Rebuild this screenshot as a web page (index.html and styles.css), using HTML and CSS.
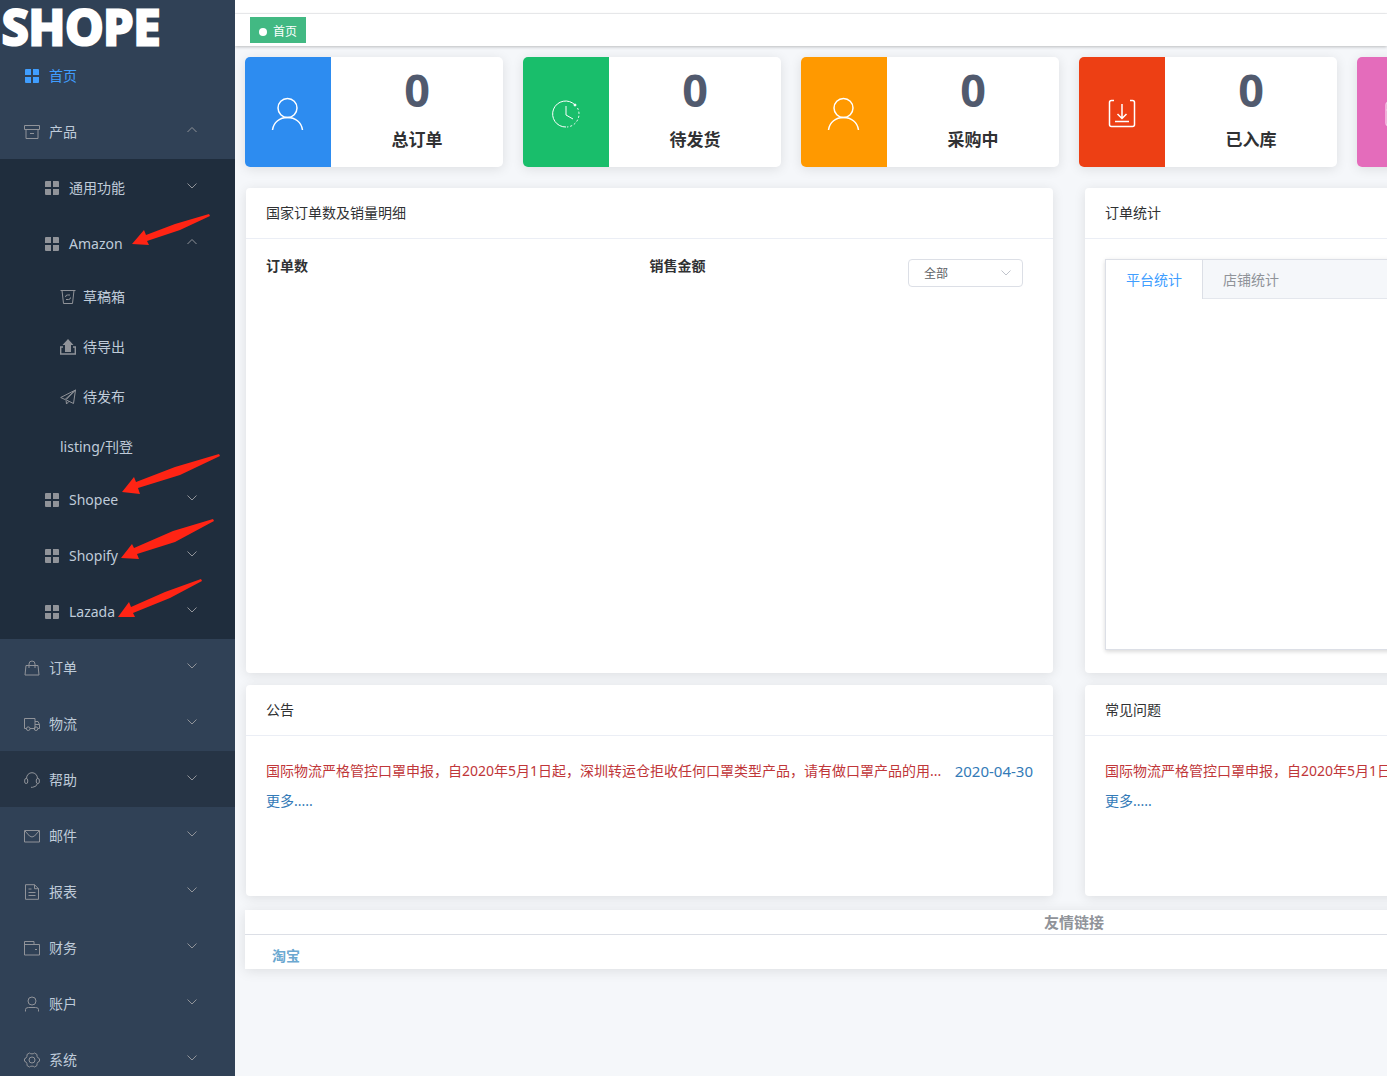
FILE: index.html
```html
<!DOCTYPE html>
<html lang="zh-CN">
<head>
<meta charset="utf-8">
<title>首页</title>
<link rel="stylesheet" href="styles.css">
</head>
<body>
<svg class="defs" aria-hidden="true">
  <symbol id="grid" viewBox="0 0 16 16"><path fill="currentColor" stroke="none" d="M1 2q0-1 1-1h5v6H1zM9 1h5q1 0 1 1v5H9zM1 9h6v6H2q-1 0-1-1zM9 9h6v5q0 1-1 1H9z"/></symbol>
  <symbol id="box" viewBox="0 0 16 16"><path d="M.5 1.500h15v4H.5zM2 5.500v9h12v-9M6 9.500h4"/></symbol>
  <symbol id="bin" viewBox="0 0 16 16"><path d="M.5 1.500h15M2 1.500l1.500 13h9l1.500-13M5.500 8q0-2 2-2h2.500M10.500 8.500q0 2-2 2H6"/></symbol>
  <symbol id="export" viewBox="0 0 16 16"><path fill="currentColor" stroke="none" d="M8 0l5.500 6h-2.500V13H5V6H2.500z"/><path d="M3 8H.7v7h14.600V8H13" stroke-width="1.400"/></symbol>
  <symbol id="plane" viewBox="0 0 16 16"><path d="M15.500 1L.7 8.500l4.300 2L15.500 1l-2 13.500-4.500-2.200L6.500 15 6 10.800 15 1.500M9 12.300l-2-1"/></symbol>
  <symbol id="bag" viewBox="0 0 16 16"><path d="M2 5.500h12l1 9.500H1zM5 8V4q0-3 3-3t3 3v4"/></symbol>
  <symbol id="truck" viewBox="0 0 16 16"><path d="M2.500 12.500h-2v-10h10.500v10H6M11 5.500h3l1.500 3v4H14M11 8.500h4.500"/><circle cx="4.200" cy="12.700" r="1.800"/><circle cx="12" cy="12.700" r="1.800"/></symbol>
  <symbol id="headset" viewBox="0 0 16 16"><path d="M2.500 6.500C2.500 3 5 .7 8 .7s5.500 2.300 5.500 5.800M13.500 11.500q-1 3.500-5 3.800H7"/><rect x=".7" y="6.500" width="3" height="5" rx="1.500"/><rect x="12.300" y="6.500" width="3" height="5" rx="1.500"/></symbol>
  <symbol id="mail" viewBox="0 0 16 16"><path d="M.5 2.500h15v11.500H.5zM1 3l4.500 5q2.500 2 5 0L15 3"/></symbol>
  <symbol id="doc" viewBox="0 0 16 16"><path d="M1.500.7h9l4 4v10.600h-13zM10.500.7v4h4M4.500 5h3M4.500 8.500h7M4.500 11.500h7"/></symbol>
  <symbol id="wallet" viewBox="0 0 16 16"><path d="M.5 4.500h15V15H.5V1.500h9.500v3M11 9.500h2"/></symbol>
  <symbol id="user" viewBox="0 0 16 16"><circle cx="8" cy="5" r="4"/><path d="M1.500 15.500v-2q0-2 3-2h7q3 0 3 2v2"/></symbol>
  <symbol id="gear" viewBox="0 0 16 16"><path d="M5.500 1l1.300.8h2.400L10.500 1 13 2.500v1.800L14.200 6l1.300.8v2.400L14 10l-1 1.700v1.800L10.500 15l-1.300-.8H6.800L5.500 15 3 13.500v-1.800L2 10 .5 9.200V6.800L2 6l1-1.700V2.500z"/><circle cx="8" cy="8" r="3"/></symbol>
  <symbol id="down" viewBox="0 0 12 12"><path d="M1.500 3.500L6 8l4.500-4.500"/></symbol>
  <symbol id="up" viewBox="0 0 12 12"><path d="M1.500 8L6 3.500 10.500 8"/></symbol>
  <symbol id="person" viewBox="0 0 36 36"><circle cx="17.500" cy="12" r="9.500"/><path d="M2.500 34C3.500 26 10 21.500 17.500 21.500S31.500 26 32.500 34"/></symbol>
  <symbol id="clock" viewBox="0 0 36 36"><path d="M27 9A13 13 0 1 0 18 31M18 10v9l7 4"/><path stroke-dasharray="2 2" d="M29.500 12A13 13 0 0 1 19 31"/><circle cx="27" cy="9" r="1" fill="currentColor"/></symbol>
  <symbol id="inbox" viewBox="0 0 36 36"><path d="M10 4.500H7.500Q5.500 4.500 5.500 6.500v22q0 2 2 2h21q2 0 2-2v-22q0-2-2-2H26M18 8v14M13.500 18l4.500 4.500 4.500-4.500M11 25.500h14"/></symbol>
  <symbol id="card" viewBox="0 0 36 36"><rect x="4" y="6" width="28" height="24" rx="3"/><path d="M4 14h28"/></symbol>
</svg>
<div class="app">
  <aside class="sidebar">
    <div class="logo">SHOPE</div>
    <nav class="menu">
      <a class="item active" href="#"><svg class="icon"><use href="#grid"/></svg><span>首页</span></a>
      <a class="item" href="#"><svg class="icon"><use href="#box"/></svg><span>产品</span><svg class="chev"><use href="#up"/></svg></a>
      <div class="submenu">
        <a class="item" href="#"><svg class="icon"><use href="#grid"/></svg><span>通用功能</span><svg class="chev"><use href="#down"/></svg></a>
        <a class="item" href="#"><svg class="icon"><use href="#grid"/></svg><span>Amazon</span><svg class="chev"><use href="#up"/></svg></a>
        <a class="leaf" href="#"><svg class="icon"><use href="#bin"/></svg><span>草稿箱</span></a>
        <a class="leaf" href="#"><svg class="icon"><use href="#export"/></svg><span>待导出</span></a>
        <a class="leaf" href="#"><svg class="icon"><use href="#plane"/></svg><span>待发布</span></a>
        <a class="leaf" href="#"><span>listing/刊登</span></a>
        <a class="item" href="#"><svg class="icon"><use href="#grid"/></svg><span>Shopee</span><svg class="chev"><use href="#down"/></svg></a>
        <a class="item" href="#"><svg class="icon"><use href="#grid"/></svg><span>Shopify</span><svg class="chev"><use href="#down"/></svg></a>
        <a class="item" href="#"><svg class="icon"><use href="#grid"/></svg><span>Lazada</span><svg class="chev"><use href="#down"/></svg></a>
      </div>
      <a class="item" href="#"><svg class="icon"><use href="#bag"/></svg><span>订单</span><svg class="chev"><use href="#down"/></svg></a>
      <a class="item" href="#"><svg class="icon"><use href="#truck"/></svg><span>物流</span><svg class="chev"><use href="#down"/></svg></a>
      <a class="item hovered" href="#"><svg class="icon"><use href="#headset"/></svg><span>帮助</span><svg class="chev"><use href="#down"/></svg></a>
      <a class="item" href="#"><svg class="icon"><use href="#mail"/></svg><span>邮件</span><svg class="chev"><use href="#down"/></svg></a>
      <a class="item" href="#"><svg class="icon"><use href="#doc"/></svg><span>报表</span><svg class="chev"><use href="#down"/></svg></a>
      <a class="item" href="#"><svg class="icon"><use href="#wallet"/></svg><span>财务</span><svg class="chev"><use href="#down"/></svg></a>
      <a class="item" href="#"><svg class="icon"><use href="#user"/></svg><span>账户</span><svg class="chev"><use href="#down"/></svg></a>
      <a class="item" href="#"><svg class="icon"><use href="#gear"/></svg><span>系统</span><svg class="chev"><use href="#down"/></svg></a>
    </nav>
    <svg class="arrows" viewBox="0 0 235 640" aria-hidden="true">
      <path d="M132 244L144 230 146 235 175 224 209 214 210 216 180 230 147 241 149 245z"/>
      <path d="M122 492L134 477 136 482 175 467 219 454 220 456 180 475 138 488 140 494z"/>
      <path d="M121 558L132 544 134 548 173 531 213 519 214 521 175 542 137 554 139 559z"/>
      <path d="M118 617L129 602 131 607 165 592 201 579 202 581 170 598 133 613 135 617z"/>
    </svg>
  </aside>
  <main class="main">
    <header class="navbar"></header>
    <div class="tags"><a class="tag" href="#">首页</a></div>
    <div class="content">
      <section class="stats">
        <article class="stat"><div class="badge blue"><svg><use href="#person"/></svg></div><div class="figure"><strong>0</strong><span>总订单</span></div></article>
        <article class="stat"><div class="badge green"><svg><use href="#clock"/></svg></div><div class="figure"><strong>0</strong><span>待发货</span></div></article>
        <article class="stat"><div class="badge orange"><svg><use href="#person"/></svg></div><div class="figure"><strong>0</strong><span>采购中</span></div></article>
        <article class="stat"><div class="badge red"><svg><use href="#inbox"/></svg></div><div class="figure"><strong>0</strong><span>已入库</span></div></article>
        <article class="stat"><div class="badge pink"><svg><use href="#card"/></svg></div><div class="figure"></div></article>
      </section>
      <section class="panels">
        <article class="panel chart">
          <h2>国家订单数及销量明细</h2>
          <div class="body summary">
            <h3>订单数</h3>
            <div class="sales">
              <h3>销售金额</h3>
              <div class="picker">
                <select aria-label="国家"><option>全部</option></select>
                <svg class="chev"><use href="#down"/></svg>
              </div>
            </div>
          </div>
        </article>
        <article class="panel chart">
          <h2>订单统计</h2>
          <div class="body">
            <div class="tabs">
              <div class="tablist" role="tablist">
                <button class="tab on" role="tab" aria-selected="true">平台统计</button>
                <button class="tab" role="tab" aria-selected="false">店铺统计</button>
              </div>
            </div>
          </div>
        </article>
        <article class="panel news">
          <h2>公告</h2>
          <div class="body">
            <div class="line"><a class="title" href="#">国际物流严格管控口罩申报，自2020年5月1日起，深圳转运仓拒收任何口罩类型产品，请有做口罩产品的用...</a><time>2020-04-30</time></div>
            <div class="line"><a class="more" href="#">更多.....</a></div>
          </div>
        </article>
        <article class="panel news">
          <h2>常见问题</h2>
          <div class="body">
            <div class="line"><a class="title" href="#">国际物流严格管控口罩申报，自2020年5月1日起，深圳转运仓拒收任何口罩类型产品，请有做口罩产品的用...</a></div>
            <div class="line"><a class="more" href="#">更多.....</a></div>
          </div>
        </article>
      </section>
      <footer class="links">
        <h2>友情链接</h2>
        <div class="sites"><a href="#">淘宝</a></div>
      </footer>
    </div>
  </main>
</div>
</body>
</html>
```

FILE: styles.css
```css
* { box-sizing: border-box; }
body {
  margin: 0;
  font: 14px/20px "Noto Sans", "Noto Sans CJK SC", sans-serif;
  color: #303133;
  background: #f5f7fa;
}
a { color: inherit; text-decoration: none; }
h2, h3 { margin: 0; font-size: 14px; }
svg { fill: none; stroke: currentColor; flex: none; }
.defs { display: none; }
.app { display: flex; height: 100vh; overflow: hidden; }

/* sidebar */
.sidebar {
  position: relative;
  flex: 0 0 235px;
  overflow: hidden;
  background: #304156;
  color: #bfcbd9;
}
.logo {
  height: 47px;
  padding-left: 2px;
  font: bold 48px/54px "Open Sans", sans-serif;
  color: #fff;
  -webkit-text-stroke: 3px #fff;
}
.item, .leaf { display: flex; align-items: center; padding-top: 2px; }
.item { height: 56px; padding-right: 37px; padding-left: 20px; }
.item .icon { width: 24px; height: 16px; margin-right: 5px; }
.icon, .chev { color: #909399; }
.chev { width: 12px; height: 12px; margin-left: auto; }
.item .chev { margin-bottom: 4px; }
.active, .active .icon { color: #409eff; }
.hovered { background: #263445; }
.submenu { background: #1f2d3d; }
.submenu .item { padding-left: 40px; }
.leaf { height: 50px; padding-left: 60px; }
.leaf .icon { width: 16px; height: 16px; margin-right: 7px; }
.arrows {
  position: absolute;
  top: 0;
  left: 0;
  width: 235px;
  height: 640px;
  fill: #ff2414;
  stroke: none;
  pointer-events: none;
}

/* top bars */
.main { flex: 1; min-width: 0; overflow: hidden; }
.navbar { height: 14px; background: #fff; border-bottom: 1px solid #f0f1f3; }
.tags {
  display: flex;
  align-items: center;
  height: 32px;
  padding-left: 15px;
  background: #fff;
  box-shadow: 0 1px 3px rgba(0, 0, 0, .24);
}
.tag {
  display: flex;
  align-items: center;
  gap: 6px;
  height: 26px;
  padding: 3px 9px 0;
  background: #42b983;
  color: #fff;
  font-size: 12px;
}
.tag::before {
  content: "";
  width: 8px;
  height: 8px;
  border-radius: 50%;
  background: #fff;
}

/* dashboard */
.content { min-width: 1678px; padding: 11px 10px; }
.stats { display: flex; gap: 20px; margin-bottom: 21px; }
.stat {
  display: flex;
  flex: 0 0 258px;
  height: 110px;
  overflow: hidden;
  border-radius: 5px;
  background: #fff;
  box-shadow: 0 2px 12px rgba(0, 0, 0, .1);
}
.badge { display: grid; place-items: center; width: 86px; padding-top: 4px; color: #fff; }
.badge svg { width: 36px; height: 36px; stroke-width: 1.5px; }
.badge.green svg { stroke-width: 1px; }
.blue { background: #2d8cf0; }
.green { background: #19be6b; }
.orange { background: #ff9900; }
.red { background: #ed3f14; }
.pink { background: #e46cbb; }
.pink svg { opacity: .6; }
.figure {
  display: flex;
  flex: 1;
  flex-direction: column;
  align-items: center;
  gap: 14px;
  padding-top: 9px;
  font-weight: bold;
}
.figure strong { font-size: 45px; font-weight: bold; line-height: 48px; color: #515a6e; }
.figure span { font-size: 17px; line-height: 24px; }
.panels {
  display: grid;
  grid-template-columns: 807px 807px;
  gap: 12px 32px;
  margin: 0 1px 14px;
}
.panel {
  display: flex;
  flex-direction: column;
  border-radius: 4px;
  background: #fff;
  box-shadow: 0 2px 12px rgba(0, 0, 0, .1);
}
.panel h2 {
  padding: 15px 20px;
  border-bottom: 1px solid #ebeef5;
  font-weight: normal;
}
.chart { min-height: 485px; }
.news { min-height: 211px; }
.body { flex: 1; padding: 20px; }
.summary { display: grid; grid-template-columns: 1fr 1fr; }
.summary h3 { line-height: 14px; }
.sales { display: flex; align-items: flex-start; justify-content: space-between; }
.picker { display: grid; width: 115px; margin-right: 10px; }
.picker select, .picker .chev { grid-area: 1 / 1; }
.picker select {
  height: 28px;
  padding: 0 15px;
  border: 1px solid #dcdfe6;
  border-radius: 4px;
  background: #fff;
  color: #606266;
  font: 12px "Noto Sans", "Noto Sans CJK SC", sans-serif;
  appearance: none;
}
.picker .chev {
  align-self: center;
  margin-right: 11px;
  color: #c0c4cc;
  pointer-events: none;
}
.tabs {
  height: 391px;
  border: 1px solid #dcdfe6;
  box-shadow: 0 2px 4px rgba(0, 0, 0, .12), 0 0 6px rgba(0, 0, 0, .04);
}
.tablist {
  display: flex;
  height: 39px;
  border-bottom: 1px solid #e4e7ed;
  background: #f5f7fa;
}
.tab {
  height: 39px;
  padding: 0 20px;
  border: 0;
  background: none;
  color: #909399;
  font: inherit;
}
.tab.on { border-right: 1px solid #dcdfe6; background: #fff; color: #409eff; }
.news .body { line-height: 30px; }
.line { display: flex; justify-content: space-between; white-space: nowrap; }
.title { color: #c03639; }
.line time, .more { color: #337ab7; }
.line time { font-size: 15px; }
.links { background: #fff; box-shadow: 0 2px 12px rgba(0, 0, 0, .1); }
.links h2 {
  height: 25px;
  border-bottom: 1px solid #dcdfe6;
  color: #909399;
  font-size: 15px;
  line-height: 24px;
  text-align: center;
}
.sites { padding: 11px 27px 3px; color: #6ba8d0; font-weight: bold; }
```
